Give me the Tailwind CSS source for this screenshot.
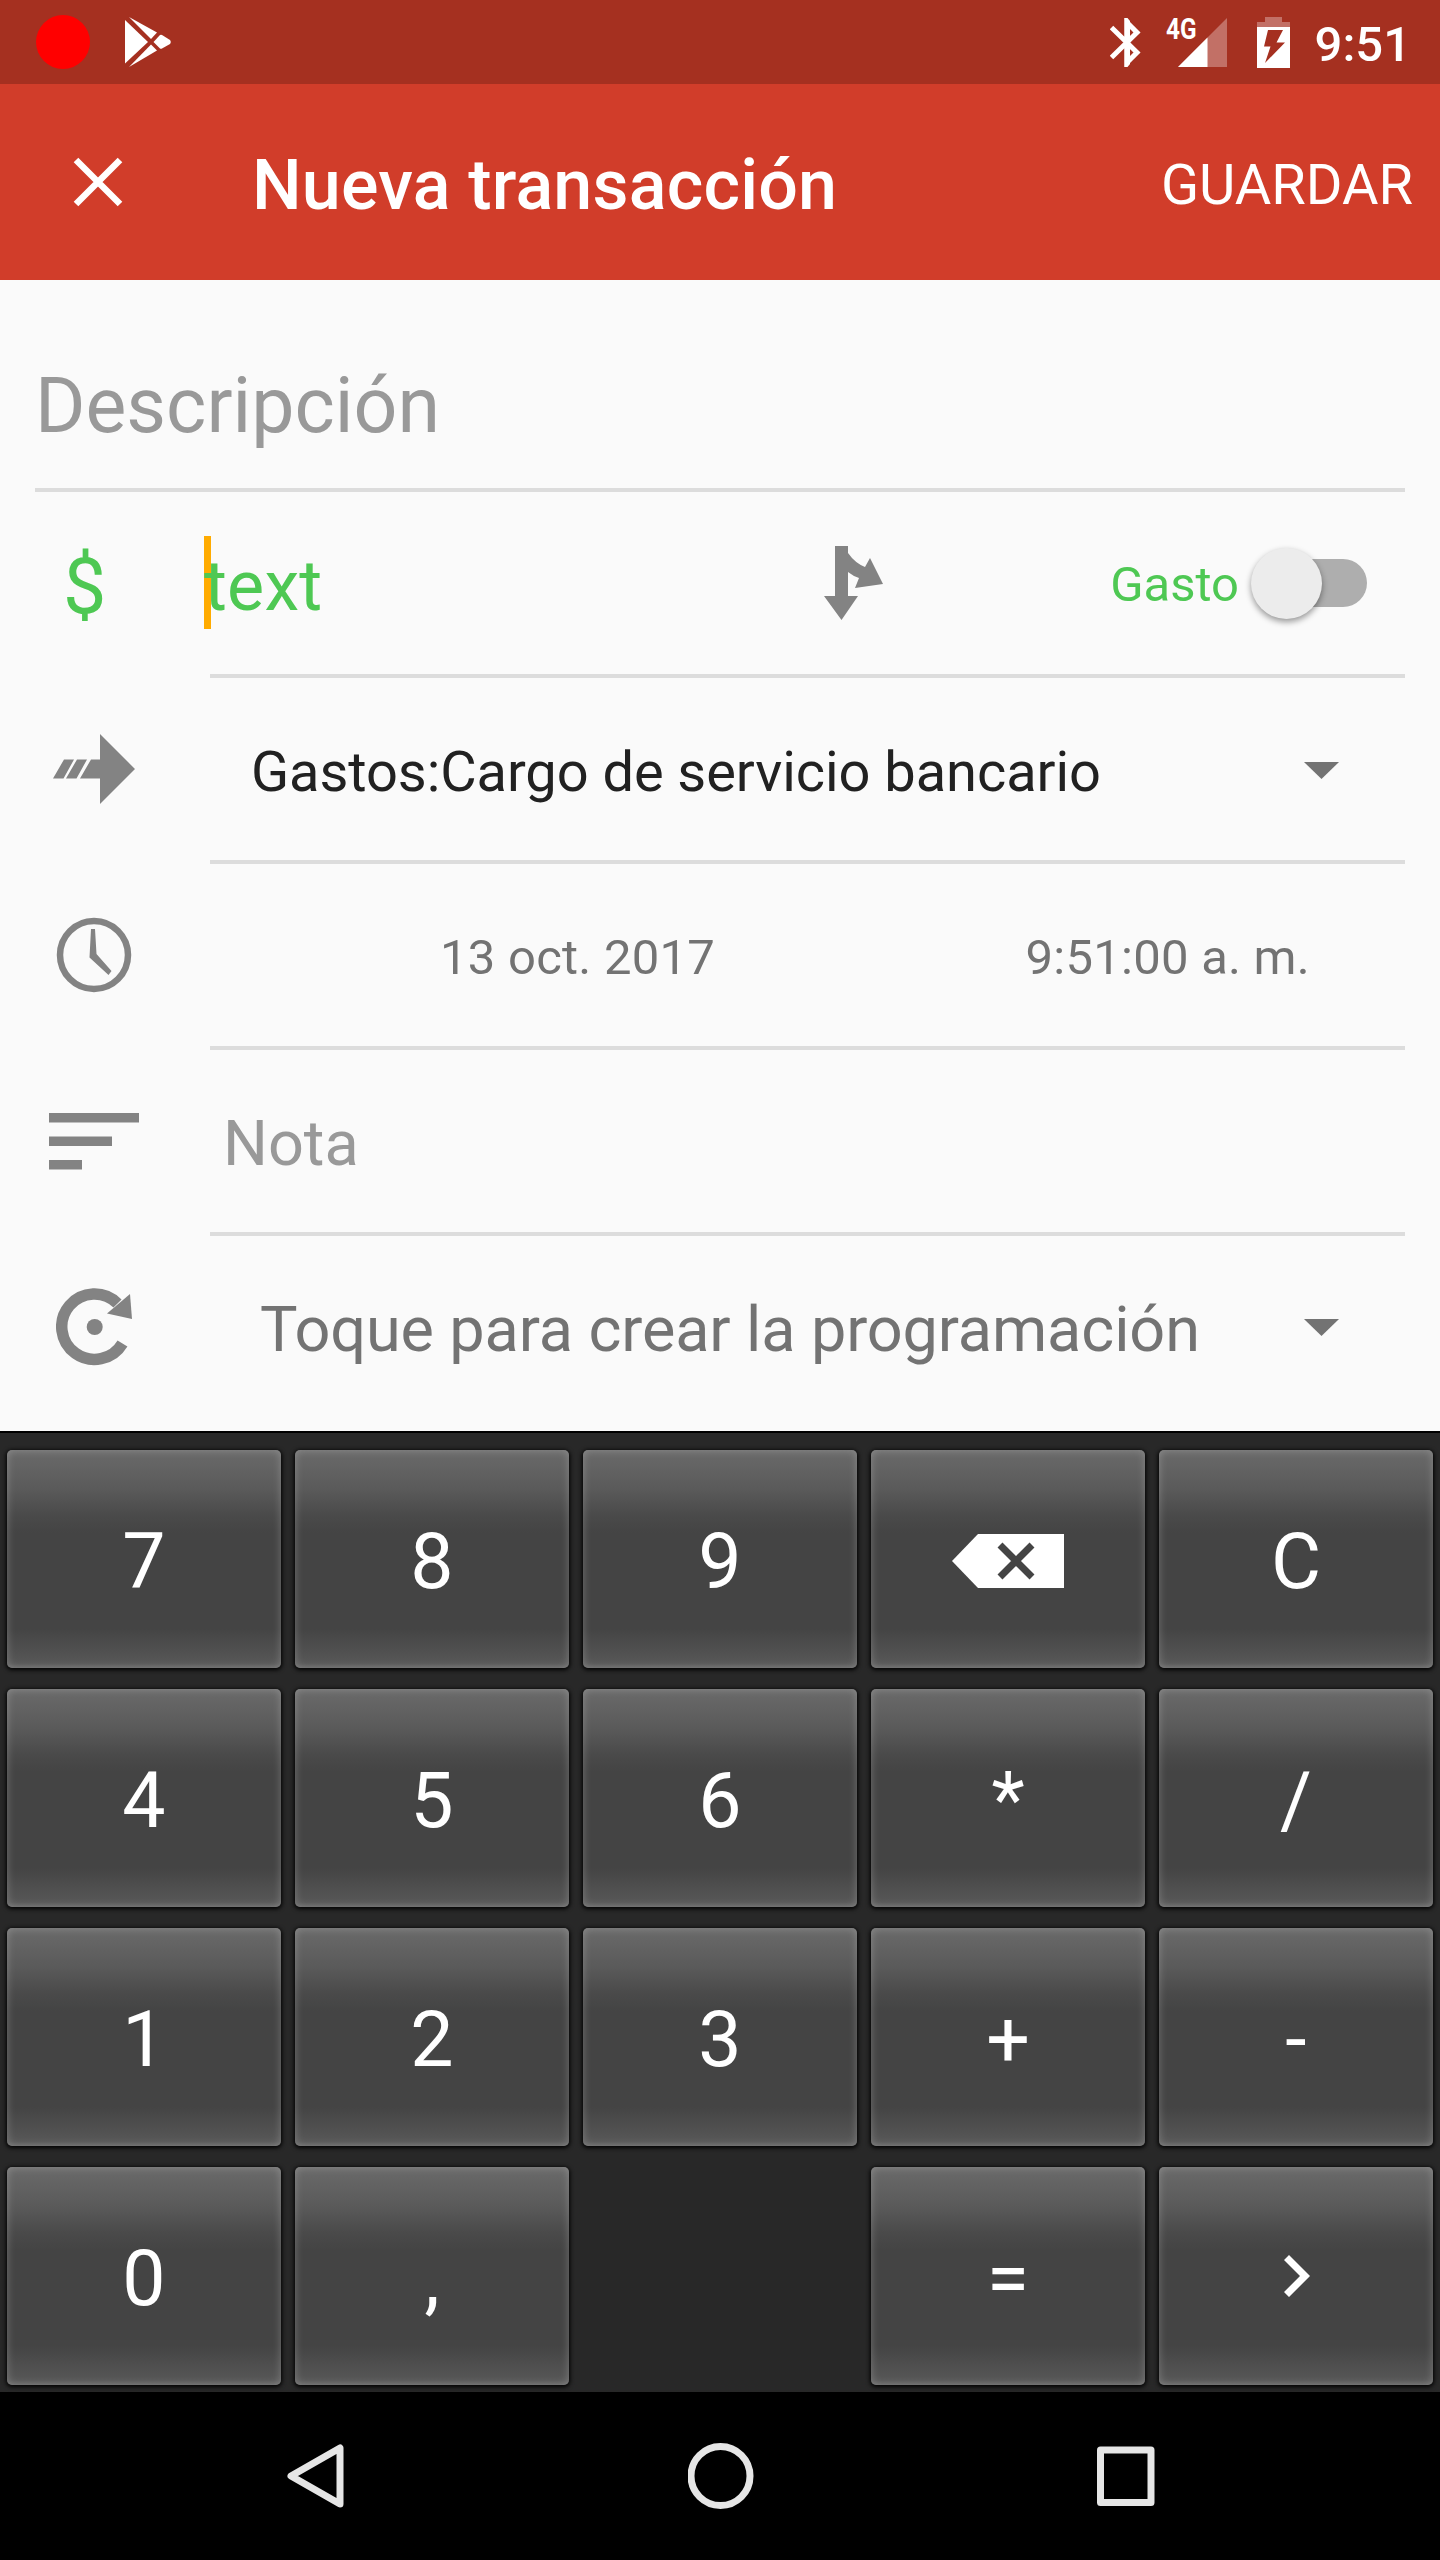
<!DOCTYPE html>
<html lang="es">
<head>
<meta charset="utf-8">
<title>Nueva transacción</title>
<script src="https://cdn.jsdelivr.net/npm/@tailwindcss/browser@4"></script>
</head>
<body class="w-[1440px] h-[2560px] overflow-hidden flex flex-col bg-[#fafafa] font-['Roboto',sans-serif] leading-none whitespace-nowrap">
  <!-- Status bar -->
  <header class="h-[84px] shrink-0 bg-[#a53020] flex items-center pl-9 pr-[29px] text-white">
    <span class="size-[54px] rounded-full bg-[#ff0000]"></span>
    <svg class="ml-[35px] w-[46px] h-[50px]" viewBox="0 0 46 50" fill="#fff"><path d="M0 3L23 25L0 46.500Z"/><path d="M4 0L32 15.500L26 22Z"/><path d="M4 50L26 27.500L32 33.500Z"/><path d="M28.500 25L35 18Q36 17.500 37 18L45 23Q46.500 25 45 27L37 31.500Q36 32 35 31.500Z"/></svg>
    <div class="ml-auto flex items-center">
      <svg class="w-[31px] h-[49px]" viewBox="0 0 31 49" fill="none" stroke="#fff" stroke-width="5"><path d="M1.500 9.500L27 34.500L17 44.500V4.500L27 14.500L1.500 39.500"/><path d="M14.500 0V49H17.500L20 46V3L17.500 0Z" fill="#fff" stroke="none"/></svg>
      <div class="relative ml-[25px] w-[61px] h-[49px]">
        <svg class="w-[61px] h-[49px]" viewBox="0 0 61 49"><path d="M61 0V49H12Z" fill="#c27066"/><path d="M41.500 19.500V49H12Z" fill="#fff"/></svg>
        <span class="absolute left-0 -top-[3px] text-[29px] font-bold origin-left scale-x-[.84]">4G</span>
      </div>
      <svg class="ml-[30px] w-[33px] h-[51px]" viewBox="0 0 33 51"><path d="M8 0H25V5H33V11H0V5H8Z" fill="#c27066"/><path d="M0 10H33V51H0Z" fill="#fff"/><path d="M11 13H26L19.500 25.500H28L8 46L13.500 29.500H7Z" fill="#a53020"/></svg>
      <span class="ml-[25px] mt-1 text-[49px] font-medium">9:51</span>
    </div>
  </header>
  <!-- App bar -->
  <div class="h-[196px] shrink-0 bg-[#d13d2a] flex items-center pl-[73px] pr-[27px] text-white">
    <svg class="size-[50px]" viewBox="0 0 50 50" stroke="#fff" stroke-width="6.500"><path d="M3 3L47 47M47 3L3 47"/></svg>
    <h1 class="ml-[129px] mt-1.5 text-[70px] font-medium tracking-[0.2px]">Nueva transacción</h1>
    <button class="ml-auto mt-1.5 text-[56px]">GUARDAR</button>
  </div>
  <!-- Form -->
  <main class="h-[1151px] shrink-0 flex flex-col">
    <div class="mx-[35px] h-[212px] shrink-0 border-b-4 border-[#dcdcdc] flex items-center pt-[45px] text-[77px] text-[#999]">Descripción</div>

    <div class="flex h-[186px] shrink-0 pr-[35px]">
      <div class="w-[210px] flex items-center pl-[63px] pt-[5px] text-[77px] text-[#4ec853]">$</div>
      <div class="grow border-b-4 border-[#dcdcdc] flex items-center">
        <div class="relative -ml-1.5 -mt-0.5 w-[614px] h-[93px] flex items-center text-[70px] text-[#4ec853]">
          <span class="absolute left-0 top-0 w-[7px] h-[93px] bg-[#ffab00]"></span>
          <span class="relative mt-2 tracking-[0.2px]">text</span>
        </div>
        <svg class="ml-[6px] w-[60px] h-[74px]" viewBox="0 0 60 74" fill="#838383"><path d="M11 0H24V7Q31 17 41 21L46 12L59 38L31 42L35 32Q29 30 24 26V50H34L17.500 74L0 50H11Z"/></svg>
        <span class="ml-auto mt-0.5 text-[49px] text-[#4ec853]">Gasto</span>
        <span class="relative ml-[12px] mr-[38px] w-[116px] h-[71px] flex items-center justify-end">
          <span class="w-[96px] h-[48px] rounded-full bg-[#aeaeae]"></span>
          <span class="absolute left-0 top-0 size-[71px] rounded-full bg-[#ececec] shadow-[0_3px_6px_rgba(0,0,0,0.4)]"></span>
        </span>
      </div>
    </div>

    <div class="flex h-[186px] shrink-0 pr-[35px]">
      <div class="w-[210px] flex items-center pl-[53px] pb-1">
        <svg class="w-[82px] h-[70px]" viewBox="0 0 82 70" fill="#838383"><path d="M11 25.500H21L10.500 44.500H0ZM24 25.500H34L23.500 44.500H13ZM38 25.500H47V0L82 35L47 70V44.500H27Z"/></svg>
      </div>
      <div class="grow border-b-4 border-[#dcdcdc] flex items-center pl-[41px] pr-[66px]">
        <span class="mt-1.5 text-[56px] text-[#212121] tracking-[-0.07px]">Gastos:Cargo de servicio bancario</span>
        <svg class="ml-auto mt-0.5 w-[35px] h-[17px]" viewBox="0 0 35 17" fill="#737373"><path d="M0 0H35L17.500 17Z"/></svg>
      </div>
    </div>

    <div class="flex h-[186px] shrink-0 pr-[35px]">
      <div class="w-[210px] flex items-center pl-[56px] pb-1">
        <svg class="size-[76px]" viewBox="0 0 76 76"><circle cx="38" cy="38" r="34" fill="none" stroke="#838383" stroke-width="6.500"/><path d="M35 12H39L40.500 37L55.500 54L52.500 58L33.500 40.500Z" fill="#838383"/></svg>
      </div>
      <div class="grow border-b-4 border-[#dcdcdc] grid grid-cols-2 items-center pr-8 text-[49px] text-[#737373]">
        <span class="mt-1 pl-[230px] tracking-[0.25px]">13 oct. 2017</span>
        <span class="mt-1 pr-[63px] text-right tracking-[0.25px]">9:51:00 a. m.</span>
      </div>
    </div>

    <div class="flex h-[186px] shrink-0 pr-[35px]">
      <div class="w-[210px] flex items-center pl-[49px] pb-1">
        <svg class="w-[90px] h-[57px]" viewBox="0 0 90 57" fill="#838383"><path d="M0 0H90V9.500H0ZM0 23.500H63V33H0ZM0 47H33V56.500H0Z"/></svg>
      </div>
      <div class="grow border-b-4 border-[#dcdcdc] flex items-center pl-[13px] pt-[5px] text-[63px] text-[#999]">Nota</div>
    </div>

    <div class="flex h-[195px] shrink-0 pr-[35px] pb-[13px]">
      <div class="w-[210px] flex items-center pl-[56px]">
        <svg class="size-[78px]" viewBox="0 0 78 78"><path d="M66.500 55.500A32.700 32.700 0 1 1 61.500 15.500" fill="none" stroke="#838383" stroke-width="11.500"/><path d="M74 6L76 31L51 25.500Z" fill="#838383"/><circle cx="38.700" cy="39" r="8" fill="#838383"/></svg>
      </div>
      <div class="grow flex items-center pl-[50px] pr-[66px]">
        <span class="mt-[5px] text-[63px] text-[#737373] tracking-[-0.12px]">Toque para crear la programación</span>
        <svg class="ml-auto mt-px w-[35px] h-[17px]" viewBox="0 0 35 17" fill="#737373"><path d="M0 0H35L17.500 17Z"/></svg>
      </div>
    </div>
  </main>
  <!-- Calculator keypad -->
  <section id="pad" class="h-[961px] shrink-0 bg-[#282828] border-t-2 border-black grid grid-cols-5 auto-rows-[218px] gap-x-[14px] gap-y-[21px] px-[7px] pt-[17px] text-white text-[77px] [text-shadow:0_0_4px_#000]"></section>
  <!-- Navigation bar -->
  <nav class="h-[168px] shrink-0 bg-black flex items-center pl-[287px] pr-[285px] justify-between">
    <svg class="w-[57px] h-[66px]" viewBox="0 0 57 66" fill="none" stroke="#e6e6e6" stroke-width="7" stroke-linejoin="round"><path d="M53 5V61L4 33Z"/></svg>
    <svg class="size-[66px]" viewBox="0 0 66 66" fill="none" stroke="#e6e6e6" stroke-width="7"><circle cx="32.500" cy="33" r="29.500"/></svg>
    <svg class="w-[58px] h-[60px]" viewBox="0 0 58 60" fill="none" stroke="#e6e6e6" stroke-width="7" stroke-linejoin="round"><path d="M3.500 4H54V56.500H3.500Z"/></svg>
  </nav>
  <script>
    const keys = ['7','8','9','del','C','4','5','6','*','/','1','2','3','+','-','0',',','','=','next'];
    const icons = {
      del: '<svg class="-ml-px mt-1 w-[112px] h-[54px]" viewBox="0 0 112 54"><path d="M26 0H112V54H26L0 27Z" fill="#fff"/><path d="M48 11L80 43M80 11L48 43" stroke="#444" stroke-width="7"/></svg>',
      next: '<svg class="ml-[2px] w-[26px] h-[42px]" viewBox="0 0 26 42" fill="#fff"><path d="M5 0L26 21L5 42L0 37L16 21L0 5Z"/></svg>'
    };
    document.getElementById('pad').innerHTML = keys.map(k => k === ''
      ? '<span></span>'
      : `<button class="flex items-center justify-center rounded-[5px] bg-[linear-gradient(#6a6a6a_0%,#5a5a5a_18%,#4a4a4a_30%,#444_38%,#444_82%,#575757_98%,#606060_100%)] [box-shadow:inset_0_0_8px_rgba(255,255,255,0.25),0_1px_4px_1px_#000]">${icons[k] || `<span class="mt-[7px]">${k}</span>`}</button>`).join('');
  </script>
</body>
</html>
